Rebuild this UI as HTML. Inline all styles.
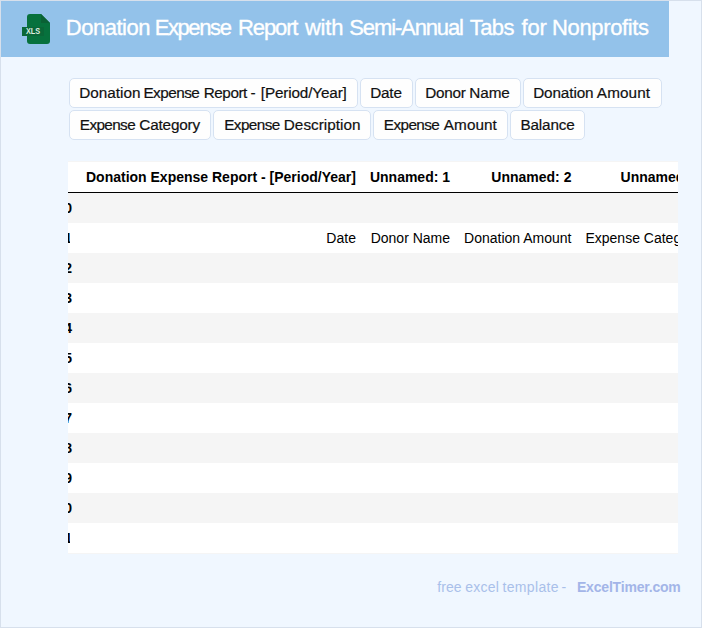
<!DOCTYPE html>
<html>
<head>
<meta charset="utf-8">
<title>Donation Expense Report with Semi-Annual Tabs for Nonprofits</title>
<style>
html,body{margin:0;padding:0;}
body{width:702px;height:628px;overflow:hidden;background:#f0f7ff;font-family:"Liberation Sans",Arial,sans-serif;position:relative;}
#card{position:absolute;left:0;top:0;width:700px;height:626px;border:1px solid #d7e0ec;background:#f0f7ff;overflow:hidden;}
#hdr{position:absolute;left:0;top:0;width:668px;height:56px;background:#93c2ea;}
#hdr svg{position:absolute;left:20px;top:12px;}
#title{position:absolute;left:0;top:14.4px;height:26px;width:668px;font-size:22px;line-height:26px;color:#fff;white-space:nowrap;}
#title span{position:absolute;top:0;-webkit-text-stroke:0.35px #fff;}
.tags{position:absolute;left:0;top:0;}
.tag{position:absolute;box-sizing:border-box;height:30px;border:1px solid #d6e2f2;border-radius:5px;background:#fefefe;color:#111;font-size:15.3px;line-height:28px;white-space:nowrap;}
.tag span{position:absolute;top:0;-webkit-text-stroke:0.2px #111;}
#tw{position:absolute;left:67px;top:160px;width:610px;height:391px;overflow:hidden;background:#fff;border-top:1px solid #f5f5f5;border-bottom:1px solid #f5f5f5;}
table{border-collapse:collapse;border-spacing:0;margin-left:-18.6px;font-size:14px;color:#000;white-space:nowrap;}
th,td{padding:7px;text-align:right;line-height:16px;height:16px;border:0;}
thead tr{border-bottom:1px solid #000;}
thead th,tbody th{font-weight:bold;}
.one{display:inline-block;overflow:hidden;height:16px;vertical-align:top;margin-right:2.4px;}
.o1{width:5.4px;}
.o2{width:12.15px;}
tbody tr:nth-child(odd){background:#f5f5f5;}
tbody tr:nth-child(even){background:#fff;}
#foot{position:absolute;left:0;top:577px;width:700px;height:18px;font-size:14px;line-height:18px;color:#a9c0ea;white-space:nowrap;}
#foot span{position:absolute;top:0;}
#foot b{color:#a3b5e8;}
</style>
</head>
<body>
<div id="card">
  <div id="hdr">
    <svg width="32" height="34" viewBox="0 0 32 34">
      <path d="M9 1 H20 L29 10 V28 Q29 31 26 31 H9 Q6 31 6 28 V4 Q6 1 9 1 Z" fill="#07713d"/>
      <path d="M20 1 L29 10 H20 Z" fill="#0a6135"/>
      <rect x="1" y="14" width="22" height="9" fill="#0a6738"/>
      <text x="4.9" y="21.2" font-family="Liberation Sans, Arial, sans-serif" font-size="8.2" font-weight="bold" fill="#deeee1" textLength="14.2" lengthAdjust="spacingAndGlyphs">XLS</text>
    </svg>
    <div id="title"><span id="t0" style="left:64.79px;letter-spacing:-0.493px">Donation</span> <span id="t1" style="left:153.65px;letter-spacing:-1.397px">Expense</span> <span id="t2" style="left:237.11px;letter-spacing:-1.138px">Report</span> <span id="t3" style="left:303.92px;letter-spacing:-0.172px">with</span> <span id="t4" style="left:348.34px;letter-spacing:-1.134px">Semi-Annual</span> <span id="t5" style="left:468.68px;letter-spacing:-0.527px">Tabs</span> <span id="t6" style="left:520.59px;letter-spacing:-0.264px">for</span> <span id="t7" style="left:551.00px;letter-spacing:-0.350px">Nonprofits</span></div>
  </div>
  <div class="tags">
    <div class="tag" style="left:68px;top:77px;width:289px"><span id="g0_0" style="left:9.20px;letter-spacing:0.018px">Donation</span> <span id="g0_1" style="left:73.45px;letter-spacing:-0.520px">Expense</span> <span id="g0_2" style="left:133.73px;letter-spacing:-0.455px">Report</span> <span id="g0_3" style="left:180.62px;letter-spacing:-0.400px">-</span> <span id="g0_4" style="left:190.83px;letter-spacing:-0.154px">[Period/Year]</span></div>
    <div class="tag" style="left:359px;top:77px;width:53px"><span id="g1_0" style="left:9.20px;letter-spacing:-0.203px">Date</span></div>
    <div class="tag" style="left:414px;top:77px;width:106px"><span id="g2_0" style="left:9.13px;letter-spacing:-0.246px">Donor</span> <span id="g2_1" style="left:53.21px;letter-spacing:-0.050px">Name</span></div>
    <div class="tag" style="left:522px;top:77px;width:139px"><span id="g3_0" style="left:9.20px;letter-spacing:-0.125px">Donation</span> <span id="g3_1" style="left:72.86px;letter-spacing:0.102px">Amount</span></div>
    <div class="tag" style="left:68px;top:109px;width:142px"><span id="g4_0" style="left:9.81px;letter-spacing:-0.611px">Expense</span> <span id="g4_1" style="left:69.30px;letter-spacing:-0.182px">Category</span></div>
    <div class="tag" style="left:212px;top:109px;width:158px"><span id="g5_0" style="left:10.14px;letter-spacing:-0.550px">Expense</span> <span id="g5_1" style="left:69.81px;letter-spacing:0.022px">Description</span></div>
    <div class="tag" style="left:372px;top:109px;width:135px"><span id="g6_0" style="left:9.81px;letter-spacing:-0.580px">Expense</span> <span id="g6_1" style="left:69.86px;letter-spacing:0.044px">Amount</span></div>
    <div class="tag" style="left:509px;top:109px;width:75px"><span id="g7_0" style="left:9.40px;letter-spacing:-0.153px">Balance</span></div>
  </div>
  <div id="tw">
    <table>
      <thead>
        <tr><th></th><th>Donation Expense Report - [Period/Year]</th><th>Unnamed: 1</th><th>Unnamed: 2</th><th>Unnamed: 3</th><th>Unnamed: 4</th><th>Unnamed: 5</th><th>Unnamed: 6</th></tr>
      </thead>
      <tbody>
        <tr><th>0</th><td></td><td></td><td></td><td></td><td></td><td></td><td></td></tr>
        <tr><th><span class="one o1">1</span></th><td>Date</td><td>Donor Name</td><td>Donation Amount</td><td>Expense Category</td><td>Expense Description</td><td>Expense Amount</td><td>Balance</td></tr>
        <tr><th>2</th><td></td><td></td><td></td><td></td><td></td><td></td><td></td></tr>
        <tr><th>3</th><td></td><td></td><td></td><td></td><td></td><td></td><td></td></tr>
        <tr><th>4</th><td></td><td></td><td></td><td></td><td></td><td></td><td></td></tr>
        <tr><th>5</th><td></td><td></td><td></td><td></td><td></td><td></td><td></td></tr>
        <tr><th>6</th><td></td><td></td><td></td><td></td><td></td><td></td><td></td></tr>
        <tr><th>7</th><td></td><td></td><td></td><td></td><td></td><td></td><td></td></tr>
        <tr><th>8</th><td></td><td></td><td></td><td></td><td></td><td></td><td></td></tr>
        <tr><th>9</th><td></td><td></td><td></td><td></td><td></td><td></td><td></td></tr>
        <tr><th>10</th><td></td><td></td><td></td><td></td><td></td><td></td><td></td></tr>
        <tr><th><span class="one o2">11</span></th><td></td><td></td><td></td><td></td><td></td><td></td><td></td></tr>
      </tbody>
    </table>
  </div>
  <div id="foot"><span id="f0" style="left:436.27px;letter-spacing:0.074px">free</span> <span id="f1" style="left:464.34px;letter-spacing:0.187px">excel</span> <span id="f2" style="left:501.43px;letter-spacing:0.363px">template</span> <span id="f3" style="left:560.59px;letter-spacing:-0.700px">-</span> <b><span id="fb0" style="left:575.96px;letter-spacing:-0.193px">ExcelTimer.com</span></b></div>
</div>
</body>
</html>
